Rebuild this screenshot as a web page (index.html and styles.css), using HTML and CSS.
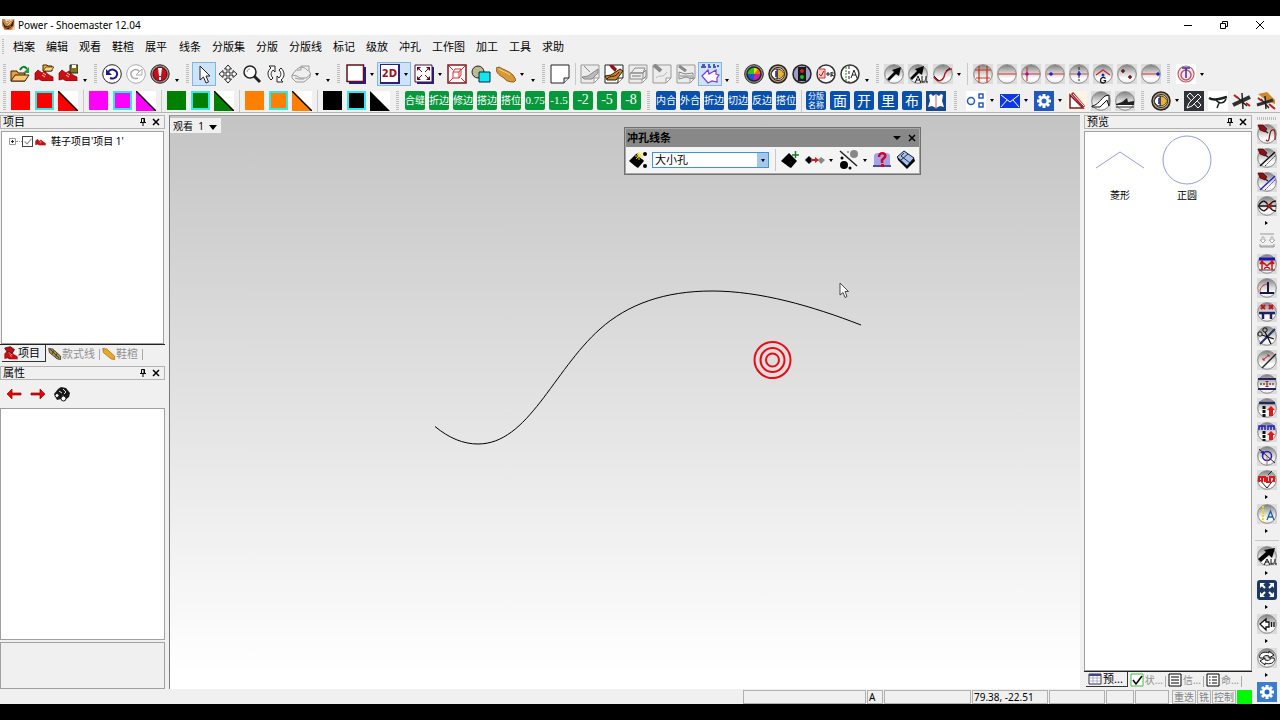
FILE: index.html
```html
<!DOCTYPE html>
<html lang="zh-CN">
<head>
<meta charset="utf-8">
<title>Power - Shoemaster 12.04</title>
<link rel="stylesheet" href="styles.css">
</head>
<body>
<svg class="defs" aria-hidden="true">
  <defs>
    <linearGradient id="gBall" x1="0" y1="0" x2="0" y2="1"><stop offset="0" stop-color="#808080"/><stop offset=".45" stop-color="#d4d4d4"/><stop offset=".75" stop-color="#fff"/><stop offset="1" stop-color="#e8e8e8"/></linearGradient>
    <symbol id="ball" viewBox="0 0 20 20"><rect width="20" height="20" fill="#dcdcdc"/><circle cx="10" cy="10" r="9.300" fill="url(#gBall)" stroke="#888"/></symbol>
    <symbol id="shoe" viewBox="0 0 20 20"><path d="M1 9l3-3 4 3 3-2c2 3 4 4 8 6v4H8l-3-2-4 1z" fill="#d00c10" stroke="#700" stroke-width=".7"/><path d="M8 11l3 2m-2-4l3 2M1 17.500h18" stroke="#fff" stroke-width=".8"/></symbol>
    <symbol id="pen" viewBox="0 0 20 20"><path d="M1 1h5l4 4-2 3-5-2z" fill="#8c1018" stroke="#400" stroke-width=".7"/><path d="M8 7l3 2" stroke="#222" stroke-width="1.500"/></symbol>
    <symbol id="ring" viewBox="0 0 20 20"><circle cx="10" cy="10" r="9" fill="#fff" stroke="#333" stroke-width="1.500"/></symbol>
    <symbol id="pin" viewBox="0 0 8 8"><path d="M2.500 .5h3v4h-3zM5 .5v4M1 4.500h6M4 5v3" fill="none" stroke="#000"/></symbol>
    <symbol id="close" viewBox="0 0 8 8"><path d="M1 1l6 6M7 1L1 7" stroke="#000" stroke-width="1.500"/></symbol>
    <symbol id="page" viewBox="0 0 20 20"><path d="M1 1h18v13l-5 5H1z" fill="#ececec" stroke="#999"/><path d="M14 19v-5h5z" fill="#fff" stroke="#999"/></symbol>
    <symbol id="gear" viewBox="0 0 20 20"><path d="M10 3v14M3 10h14M5 5l10 10M15 5L5 15" stroke="#fff" stroke-width="3"/><circle cx="10" cy="10" r="5" fill="#fff"/><circle cx="10" cy="10" r="2.500" fill="#2864c8"/></symbol>
    <symbol id="eye" viewBox="0 0 20 20"><circle cx="10" cy="10" r="9" fill="#c0a068" stroke="#222" stroke-width="1.500"/><circle cx="10" cy="10" r="6.500" fill="#f4f0e4" stroke="#222"/><path d="M9 5c6 0 6 5 8 5-2 0-2 5-8 5z" fill="#f0b030" stroke="#442"/><path d="M3 10c2-5 5-5 6-5v10c-1 0-4 0-6-5z" fill="#fff" stroke="#114"/><path d="M8 7v6" stroke="#1020a0" stroke-width="1.500"/></symbol>
  </defs>
</svg>

<div class="app">
  <header class="titlebar">
    <svg class="logo" viewBox="0 0 14 14"><path d="M0 1h14v12H3L0 8z" fill="#ecd8b8"/><path d="M0 1h3l2 5 8-5v8l-3 4H3L0 8z" fill="#b88848"/><path d="M0 3l4 6 5-1 4-6-1 6-5 4-4-1z" fill="#38180c"/><path d="M3 11l7-2M5 4l3-1" stroke="#e84820"/><path d="M6 8l4-4" stroke="#f8d860"/></svg>
    <span class="title">Power - Shoemaster 12.04</span>
    <button class="win" aria-label="最小化"><svg viewBox="0 0 10 10"><path d="M1 5.500h8" stroke="#000"/></svg></button>
    <button class="win" aria-label="还原"><svg viewBox="0 0 10 10"><path d="M1.500 3.500h5v5h-5zM3.500 3V1.500h5v5H7" fill="none" stroke="#000"/></svg></button>
    <button class="win" aria-label="关闭"><svg viewBox="0 0 10 10"><path d="M1 1l8 8M9 1L1 9" stroke="#000"/></svg></button>
  </header>

  <nav class="menu"><i class="grip"></i>
    <button>档案</button><button>编辑</button><button>观看</button><button>鞋楦</button><button>展平</button><button class="gap">线条</button><button>分版集</button><button>分版</button><button>分版线</button><button>标记</button><button>级放</button><button>冲孔</button><button>工作图</button><button>加工</button><button>工具</button><button>求助</button>
  </nav>

  <div class="bar">
    <i class="grip first"></i>
    <button class="tool" aria-label="打开"><svg viewBox="0 0 20 20"><path d="M1 17V7h6l1 2h7v8z" fill="#e8a040" stroke="#402000"/><path d="M1 17l4-6h14l-4 6z" fill="#f8c878" stroke="#402000"/><path d="M10 6c2-4 5-4 7-1" fill="none" stroke="#087820" stroke-width="2"/><path d="M19 3v6h-6z" fill="#20a040"/></svg></button>
    <button class="tool" aria-label="打开鞋子"><svg viewBox="0 0 20 20"><use href="#shoe"/><path d="M9 7V1h4l1 1h4v5z" fill="#e8b838" stroke="#402000"/><path d="M9 7l3-4h8l-3 4z" fill="#f8d878" stroke="#402000" stroke-width=".7"/></svg></button>
    <button class="tool" aria-label="保存鞋子"><svg viewBox="0 0 20 20"><use href="#shoe"/><path d="M12 1h8v8h-8z" fill="#807818" stroke="#222"/><path d="M14 1h4v3h-4z" fill="#fff"/></svg></button>
    <button class="more" aria-label="更多"></button><i class="grip"></i>
    <button class="tool" aria-label="撤消"><svg viewBox="0 0 20 20"><circle cx="10" cy="10" r="9.300" fill="#fff" stroke="#222"/><path d="M6 8c4-5 10-1 9 3-1 4-5 4-7 3" fill="none" stroke="#1c1890" stroke-width="2"/><path d="M4 5v6h6z" fill="#1c1890"/></svg></button>
    <button class="tool" aria-label="重做"><svg viewBox="0 0 20 20"><circle cx="10" cy="10" r="9.300" fill="#fff" stroke="#aaa"/><path d="M14 8C10 3 4 7 5 11c1 4 5 4 7 3" fill="none" stroke="#aaa" stroke-width="1.500"/><path d="M16 5v6h-6z" fill="#fff" stroke="#aaa"/></svg></button>
    <button class="tool" aria-label="停止"><svg viewBox="0 0 20 20"><circle cx="10" cy="10" r="9.200" fill="#999" stroke="#222"/><circle cx="10" cy="10" r="7" fill="#c80c1c" stroke="#600"/><path d="M8 4h4l-1 8H9zM9 13h2v3H9z" fill="#fff"/></svg></button>
    <button class="more" aria-label="更多"></button><i class="grip"></i>
    <button class="tool on" aria-label="选择"><svg viewBox="0 0 20 20"><path d="M6 2v14l3.500-3 2.500 6 2.500-1-2.500-6h4z" fill="#fff" stroke="#222"/></svg></button>
    <button class="tool" aria-label="移动"><svg viewBox="0 0 20 20"><path d="M10 1l3.500 4H11v4h4V6.500l4 3.500-4 3.500V11h-4v4h2.500L10 19l-3.500-4H9v-4H5v2.500L1 10l4-3.500V9h4V5H6.500z" fill="#fff" stroke="#222"/></svg></button>
    <button class="tool" aria-label="缩放"><svg viewBox="0 0 20 20"><path d="M12 12l6 6" stroke="#222" stroke-width="3"/><circle cx="8" cy="8" r="6" fill="#fff" stroke="#222" stroke-width="1.500"/><path d="M5 8c0-2 1-3 3-3" fill="none" stroke="#888"/></svg></button>
    <button class="tool" aria-label="旋转"><svg viewBox="0 0 20 20"><path d="M9 2H3l2 2c-4 3-4 8 0 12l2-2c-3-3-2-6 0-8l2 2zM11 18h6l-2-2c4-3 4-8 0-12l-2 2c3 3 2 6 0 8l-2-2z" fill="#fff" stroke="#222"/></svg></button>
    <button class="tool drop" aria-label="翻转"><svg viewBox="0 0 20 20"><path d="M1 11l4-5h5V2h8v5l2 3-5 4H9l-3-2zM1 11v3l4 4h8l6-5v-3M4 14l4 1h5M6 5c4-3 8-2 11 2" fill="#eee" stroke="#999"/></svg></button>
    <button class="more" aria-label="更多"></button><i class="grip"></i>
    <button class="tool drop" aria-label="窗口"><svg viewBox="0 0 20 20"><path d="M3 19h16V3" fill="none" stroke="#222080" stroke-width="2"/><path d="M1 1h16.500v16.500H1z" fill="#fff" stroke="#601020" stroke-width="1.500"/></svg></button>
    <button class="tool drop on" aria-label="二维"><span class="twod">2D</span></button>
    <button class="tool drop" aria-label="全屏"><svg viewBox="0 0 20 20"><path d="M3 19h16V3" fill="none" stroke="#222080" stroke-width="2"/><path d="M1 1h17v17H1z" fill="#fff" stroke="#401040"/><path d="M3 3h4L3 7zM16 3h-4l4 4zM3 16h4l-4-4zM16 16h-4l4-4z" fill="#600c10"/><path d="M4 4l4 4m7-4l-4 4M4 15l4-4m7 4l-4-4" stroke="#600c10"/></svg></button>
    <button class="tool" aria-label="适合选择"><svg viewBox="0 0 20 20"><path d="M1 1h18v18H1z" fill="#fff" stroke="#801820" stroke-width="1.500"/><path d="M6 8h6v6H6zM6 8l2-3h6v6l-2 3M12 8l2-3M2 2l4 4m12-4l-4 4M2 18l4-4m12 4l-4-4" fill="none" stroke="#d83030"/></svg></button>
    <button class="tool" aria-label="图形"><svg viewBox="0 0 20 20"><circle cx="7" cy="8" r="6" fill="#b8bc90" stroke="#222"/><path d="M8 8h11v10H8z" fill="#10e8f0" stroke="#124"/></svg></button>
    <button class="tool drop" aria-label="鞋楦"><svg viewBox="0 0 20 20"><path d="M0 4l3-1c5 3 10 4 14 8l3 5-2 2c-5 0-8-1-10-4-3-2-8-4-8-10z" fill="#d89838" stroke="#906018"/><path d="M3 5c4 3 8 3 11 6" stroke="#f8d080" fill="none"/></svg></button>
    <button class="more" aria-label="更多"></button><i class="grip"></i>
    <button class="tool" aria-label="空白页"><svg viewBox="0 0 20 20"><path d="M1 1h18v13l-5 5H1z" fill="#fff" stroke="#222"/><path d="M14 19v-5h5" fill="#ddd" stroke="#222"/></svg></button>
    <i class="sep"></i>
    <button class="tool" aria-label="鞋楦页"><svg viewBox="0 0 20 20"><use href="#page"/><path d="M2 13l6-1 10-7v4l-6 6H4zM4 2l6 6" stroke="#888" fill="#bbb"/></svg></button>
    <button class="tool" aria-label="款式页"><svg viewBox="0 0 20 20"><path d="M1 1h18v13l-5 5H1z" fill="#fff" stroke="#222"/><path d="M1 12l6-1 9-6 3 2-7 9H3z" fill="#c88828" stroke="#301800"/><path d="M5 1h4l4 4-2 3-4-4z" fill="#901018"/><path d="M3 15c4-5 8 0 12-7" fill="none" stroke="#301800"/><path d="M14 19v-5h5" fill="#fff" stroke="#222"/></svg></button>
    <button class="tool" aria-label="分版页"><svg viewBox="0 0 20 20"><use href="#page"/><path d="M3 9l4-5h10l-2 5zM2 9h13v6H2zM15 9l3-3v6l-3 3" fill="#eee" stroke="#888"/><path d="M4 12h9" stroke="#777"/></svg></button>
    <button class="tool" aria-label="标记页"><svg viewBox="0 0 20 20"><use href="#page"/><path d="M2 1l7 6" stroke="#888" stroke-width="4"/><path d="M4 14c3-4 7 1 11-6" fill="none" stroke="#bbb"/></svg></button>
    <button class="tool" aria-label="工作页"><svg viewBox="0 0 20 20"><use href="#page"/><path d="M3 2l7 5" stroke="#888" stroke-width="3"/><path d="M3 8v7l7-2 7 2V9l-8 1zM4 12h12" fill="none" stroke="#888"/></svg></button>
    <button class="tool on" aria-label="冲孔"><svg viewBox="0 0 20 20"><path d="M1 3h5M2 1h3M8 3h3M13 3h3M8 1h2M13 1h2M18 1v2" fill="none" stroke="#2828a0" stroke-width="1.500"/><path d="M2 12l6-6 1 4 7-4v4l3 1-2 3v4l-5-1-4 2z" fill="#fff" stroke="#8038d0" stroke-width="1.200"/></svg></button>
    <button class="more" aria-label="更多"></button><i class="grip"></i>
    <button class="tool" aria-label="颜色"><svg viewBox="0 0 20 20"><circle cx="10" cy="10" r="9.300" fill="#999" stroke="#222"/><path d="M10 10V3a7 7 0 0 0-7 7z" fill="#30c020"/><path d="M10 10V3a7 7 0 0 1 7 7z" fill="#f07020"/><path d="M10 10h7a7 7 0 0 1-7 7z" fill="#d020a0"/><path d="M10 10v7a7 7 0 0 1-7-7z" fill="#2050e0"/><path d="M10 10V3l4 2z" fill="#f0e010"/><circle cx="10" cy="10" r="7" fill="none" stroke="#222" stroke-width="1.500"/></svg></button>
    <button class="tool" aria-label="可见"><svg viewBox="0 0 20 20"><use href="#eye"/></svg></button>
    <button class="tool" aria-label="状态灯"><svg viewBox="0 0 20 20"><circle cx="10" cy="10" r="9" fill="#a09cc8" stroke="#222" stroke-width="1.500"/><path d="M6 3h8v14H6z" fill="#181818"/><circle cx="10" cy="7" r="2" fill="#e01818"/><circle cx="10" cy="13" r="2" fill="#10c020"/></svg></button>
    <button class="tool" aria-label="检查"><svg viewBox="0 0 20 20"><use href="#ring"/><path d="M2 5h7v9H2" fill="#fcc" stroke="#d03030"/><path d="M3 10l2 2 3-5" fill="none" stroke="#c01010"/><path d="M10 10h4m-2-2v4M15 9c3-2 3 1 0 2l3 1M15 8v5" stroke="#222" fill="none"/></svg></button>
    <button class="tool" aria-label="文字"><svg viewBox="0 0 20 20"><use href="#ring"/><path d="M6 3v14" stroke="#208020" stroke-dasharray="2 1"/><path d="M9 2v16" stroke="#222" stroke-dasharray="3 2"/><path d="M11 14l3-8 3 8m-5-3h4" fill="none" stroke="#222"/></svg></button>
    <button class="more" aria-label="更多"></button><i class="grip"></i>
    <button class="tool" aria-label="选取"><svg viewBox="0 0 20 20"><use href="#ball"/><path d="M3 15l7-7-2-2 9-3-2 9-3-2-7 7z" fill="#080808"/></svg></button>
    <button class="tool" aria-label="选取全部"><svg viewBox="0 0 20 20"><use href="#ball"/><path d="M2 14l7-7-2-2 9-3-2 9-3-2-7 7z" fill="#080808"/><path d="M7 19l3-7 3 7m-5-3h4M14 12v6h3M18 12v6h2" fill="none" stroke="#111"/></svg></button>
    <button class="tool drop" aria-label="曲线"><svg viewBox="0 0 20 20"><use href="#ball"/><path d="M1 13c4 6 8 4 10 0 1-6 4-8 8-8" fill="none" stroke="#c01818" stroke-width="1.500"/><path d="M1 12l5 5M13 7l4-3" stroke="#222"/></svg></button>
    <i class="sep"></i>
    <button class="tool" aria-label="网格"><svg viewBox="0 0 20 20"><use href="#ball"/><path d="M6 2v17M14 2v17M2 6h16M3 14h14" stroke="#d03018" stroke-width="1.200"/></svg></button>
    <button class="tool" aria-label="水平线"><svg viewBox="0 0 20 20"><use href="#ball"/><path d="M1 10h18" stroke="#d05040" stroke-width="1.200"/></svg></button>
    <button class="tool" aria-label="垂点"><svg viewBox="0 0 20 20"><use href="#ball"/><path d="M1 10h18M6 3v14" stroke="#d03030" stroke-width="1.200"/><circle cx="6" cy="10" r="1.800" fill="#a018a0"/></svg></button>
    <button class="tool" aria-label="端点"><svg viewBox="0 0 20 20"><use href="#ball"/><path d="M2 10h17" stroke="#d05040" stroke-width="1.200"/><circle cx="6" cy="10" r="1.800" fill="#2020d0"/></svg></button>
    <button class="tool" aria-label="中点"><svg viewBox="0 0 20 20"><use href="#ball"/><path d="M1 10h18" stroke="#c05050"/><path d="M10 3v14" stroke="#222" stroke-dasharray="3 1"/><circle cx="10" cy="10" r="1.800" fill="#2020d0"/></svg></button>
    <button class="tool" aria-label="重心"><svg viewBox="0 0 20 20"><use href="#ball"/><path d="M3 11l7-5 7 5" fill="none" stroke="#d02020" stroke-width="1.200"/><circle cx="10" cy="11" r="1.500" fill="#2020d0"/><path d="M12.500 14.500c-2-2-5-1-5 2s4 3 5 1v-1h-2" fill="none" stroke="#111" stroke-width="1.200"/></svg></button>
    <button class="tool" aria-label="点"><svg viewBox="0 0 20 20"><use href="#ball"/><path d="M4 7h4M6 5v4M11 13h4M13 11v4" stroke="#601818" stroke-width="1.500"/></svg></button>
    <button class="tool" aria-label="终点"><svg viewBox="0 0 20 20"><use href="#ball"/><path d="M1 10h17" stroke="#d05040" stroke-width="1.200"/><circle cx="17" cy="10" r="1.800" fill="#2020d0"/></svg></button>
    <i class="grip"></i>
    <button class="tool drop" aria-label="定位"><svg viewBox="0 0 20 20"><path d="M0 0h20v20H0z" fill="#fff"/><circle cx="10" cy="10" r="8" fill="#fce8e8" stroke="#b85868" stroke-width="1.200"/><circle cx="10" cy="11" r="5" fill="none" stroke="#b85868" stroke-width="1.500"/><path d="M6 4h8M10 4v10" stroke="#3030b0" stroke-width="1.500"/></svg></button>
  </div>

  <div class="bar">
    <i class="grip first"></i>
    <button class="tool" aria-label="红色"><span class="sw red"></span></button><button class="tool" aria-label="红色边框"><span class="sw red edge"></span></button><button class="tool" aria-label="红色半填"><svg viewBox="0 0 20 20"><path d="M0 0h20v20H0z" fill="#fff"/><path d="M0 0l20 20H0z" fill="#f00"/><path d="M0 0l20 20" stroke="#000" stroke-width="1.500"/></svg></button><i class="sep"></i>
    <button class="tool" aria-label="洋红"><span class="sw magenta"></span></button><button class="tool" aria-label="洋红边框"><span class="sw magenta edge"></span></button><button class="tool" aria-label="洋红半填"><svg viewBox="0 0 20 20"><path d="M0 0h20v20H0z" fill="#fff"/><path d="M0 0l20 20H0z" fill="#f0f"/><path d="M0 0l20 20" stroke="#000" stroke-width="1.500"/></svg></button><i class="sep"></i>
    <button class="tool" aria-label="绿色"><span class="sw green"></span></button><button class="tool" aria-label="绿色边框"><span class="sw green edge"></span></button><button class="tool" aria-label="绿色半填"><svg viewBox="0 0 20 20"><path d="M0 0h20v20H0z" fill="#fff"/><path d="M0 0l20 20H0z" fill="#008000"/><path d="M0 0l20 20" stroke="#000" stroke-width="1.500"/></svg></button><i class="sep"></i>
    <button class="tool" aria-label="橙色"><span class="sw orange"></span></button><button class="tool" aria-label="橙色边框"><span class="sw orange edge"></span></button><button class="tool" aria-label="橙色半填"><svg viewBox="0 0 20 20"><path d="M0 0h20v20H0z" fill="#fff"/><path d="M0 0l20 20H0z" fill="#ff8000"/><path d="M0 0l20 20" stroke="#000" stroke-width="1.500"/></svg></button><i class="sep"></i>
    <button class="tool" aria-label="黑色"><span class="sw black"></span></button><button class="tool" aria-label="黑色边框"><span class="sw black edge"></span></button><button class="tool" aria-label="黑色半填"><svg viewBox="0 0 20 20"><path d="M0 0h20v20H0z" fill="#fff"/><path d="M0 0l20 20H0z"/></svg></button><i class="grip"></i>
    <button class="tool"><span class="tag">合缝</span></button><button class="tool"><span class="tag">折边</span></button><button class="tool"><span class="tag">修边</span></button><button class="tool"><span class="tag">搭边</span></button><button class="tool"><span class="tag">搭位</span></button><button class="tool"><span class="tag num">0.75</span></button><button class="tool"><span class="tag num">-1.5</span></button><button class="tool"><span class="tag num big">-2</span></button><button class="tool"><span class="tag num big">-5</span></button><button class="tool"><span class="tag num big">-8</span></button><i class="grip"></i>
    <button class="tool"><span class="tag blue">内合</span></button><button class="tool"><span class="tag blue">外合</span></button><button class="tool"><span class="tag blue">折边</span></button><button class="tool"><span class="tag blue">切边</span></button><button class="tool"><span class="tag blue">反边</span></button><button class="tool"><span class="tag blue">搭位</span></button><i class="sep"></i>
    <button class="tool"><span class="tag blue four">分版<br>名称</span></button><button class="tool"><span class="tag blue one">面</span></button><button class="tool"><span class="tag blue one">开</span></button><button class="tool"><span class="tag blue one">里</span></button><button class="tool"><span class="tag blue one">布</span></button>
    <button class="tool" aria-label="皮料"><svg viewBox="0 0 20 20"><path d="M0 0h20v20H0z" fill="#184890"/><path d="M3 4l2-1 2 2 3-2 3 2 2-2 2 1-1 6 2 6-4-1-4 2-4-2-4 1 2-6z" fill="#fff"/><path d="M10 3v15" stroke="#c06060"/></svg></button>
    <i class="grip wide"></i>
    <button class="tool drop" aria-label="圆点"><svg viewBox="0 0 20 20"><path d="M0 0h20v20H0z" fill="#fff"/><circle cx="5" cy="10" r="3.500" fill="none" stroke="#2858c8" stroke-width="1.500"/><path d="M13 3h4v4h-4zM13 12h4v4h-4z" fill="none" stroke="#2858c8" stroke-width="1.500"/></svg></button>
    <button class="tool drop" aria-label="邮件"><svg viewBox="0 0 20 20"><path d="M0 3h20v14H0z" fill="#1038e0"/><path d="M1 4l9 7 9-7M1 16l6-7M19 16l-6-7" fill="none" stroke="#fff"/></svg></button>
    <button class="tool drop" aria-label="设置"><svg viewBox="0 0 20 20"><path d="M0 0h20v20H0z" fill="#2058c0"/><use href="#gear"/></svg></button>
    <button class="tool" aria-label="量度"><svg viewBox="0 0 20 20"><path d="M0 0h20v20H0z" fill="#fff4e4"/><path d="M3 4v13h13z" fill="#fff" stroke="#801820" stroke-width="1.500"/><path d="M5 2l12 14" stroke="#b02030" stroke-width="3"/><path d="M6 3l11 12" stroke="#fff"/></svg></button>
    <button class="tool" aria-label="鞋跟"><svg viewBox="0 0 20 20"><use href="#ball"/><path d="M1 15c6-1 9-7 13-10l4-1v11l-2-6-7 7H1z" fill="#fff" stroke="#111"/></svg></button>
    <button class="tool" aria-label="鞋面"><svg viewBox="0 0 20 20"><use href="#ball"/><path d="M1 13l6-2 5-4 1 4 6-1v4H1z" fill="#222"/><path d="M1 16h18" stroke="#333"/></svg></button>
    <i class="grip"></i>
    <button class="tool drop" aria-label="显示"><svg viewBox="0 0 20 20"><use href="#eye"/></svg></button>
    <button class="tool" aria-label="尺笔"><svg viewBox="0 0 20 20"><path d="M0 0h20v20H0z" fill="#303438"/><path d="M3 5l3-3 11 12-3 3z" fill="#303438" stroke="#fff"/><path d="M3 17l2-5 9-9 3 3-9 9z" fill="#303438" stroke="#fff"/></svg></button>
    <button class="tool" aria-label="带子"><svg viewBox="0 0 20 20"><path d="M0 0h20v20H0z" fill="#fff"/><path d="M1 7c5 3 10 1 18-1" fill="none" stroke="#182020" stroke-width="2.500"/><path d="M8 9c3 4 8 4 10-1M11 12l-2 5" fill="none" stroke="#182020" stroke-width="1.500"/></svg></button>
    <button class="tool" aria-label="缝合"><svg viewBox="0 0 20 20"><path d="M1 14L18 6" stroke="#303030" stroke-width="4"/><path d="M10 2l1 16M5 6l10 9" stroke="#222" stroke-width="1.500"/><path d="M2 4l4 3M14 12l4 3" stroke="#c01818" stroke-width="2"/></svg></button>
    <button class="tool" aria-label="楦缝"><svg viewBox="0 0 20 20"><path d="M2 3l9-2 8 8v4l-8-3z" fill="#d08828"/><path d="M1 14l16-5" stroke="#303030" stroke-width="3"/><path d="M9 5l1 13M5 8l8 9" stroke="#222" stroke-width="1.500"/><path d="M2 7l4 3M13 13l6 5" stroke="#c01818" stroke-width="2"/></svg></button>
  </div>

  <div class="work">
    <div class="center">
      <div class="docks">
        <aside class="left">
          <div class="cap"><h2>项目</h2><button aria-label="固定"><svg viewBox="0 0 8 8"><use href="#pin"/></svg></button><button aria-label="关闭"><svg viewBox="0 0 8 8"><use href="#close"/></svg></button></div>
          <div class="box tree">
            <div class="node"><button class="plus" aria-label="展开"><svg viewBox="0 0 7 7"><path d="M.5 .5h6v6h-6z" fill="#fff" stroke="#999"/><path d="M2 3.500h3M3.500 2v3" stroke="#224"/></svg></button><i class="dots"></i><label><input type="checkbox" checked><svg viewBox="0 0 20 20"><use href="#shoe"/></svg><span>鞋子项目'项目 1'</span></label></div>
          </div>
          <div class="tabs"><button class="cur"><svg viewBox="0 0 20 20"><use href="#shoe" y="2"/><path d="M1 3l8-2 6 4-3 5-8-2z" fill="#c01018" stroke="#300"/></svg>项目</button><button><svg viewBox="0 0 20 20"><path d="M1 2l6 1 11 10v5l-5-1L2 8z" fill="#a89048" stroke="#222"/><path d="M3 3l13 13M8 5l-2 5m7-1l-2 5" stroke="#222"/></svg>款式线</button><button><svg viewBox="0 0 20 20"><path d="M1 2l6 1 11 10v5l-5-1L2 8z" fill="#e8a828" stroke="#a06810"/></svg>鞋楦</button></div>
          <div class="cap second"><h2>属性</h2><button aria-label="固定"><svg viewBox="0 0 8 8"><use href="#pin"/></svg></button><button aria-label="关闭"><svg viewBox="0 0 8 8"><use href="#close"/></svg></button></div>
          <div class="props"><button aria-label="后退"><svg viewBox="0 0 16 16"><path d="M1 8l5-5v4h9v2H6v4z" fill="#e00808" stroke="#900" stroke-width=".7"/></svg></button><button aria-label="前进"><svg viewBox="0 0 16 16"><path d="M15 8l-5-5v4H1v2h9v4z" fill="#e00808" stroke="#900" stroke-width=".7"/></svg></button><button aria-label="查找"><svg viewBox="0 0 16 16"><path d="M0 8l4-5 3-2 5 1 4 5-1 4-4 3-2-5-2 4-4 1z" fill="#181818"/><circle cx="3" cy="9.500" r="2" fill="#fff" stroke="#111"/><circle cx="9.500" cy="12.500" r="2.500" fill="#fff" stroke="#111"/><path d="M5 5l3 2M9 3l3 3M10 8l2-2" stroke="#ddd"/></svg></button></div>
          <div class="box list"></div>
          <div class="box hint"></div>
        </aside>

        <main class="canvas">
          <svg class="draw" viewBox="170 115 910 573" preserveAspectRatio="xMinYMin meet">
            <path d="M435 425.500C449 437 463 443 478 443C528 443 553 370 600 328C628 303 665 290 712 290C760 290 812 305 861 324" fill="none" stroke="#000"/>
            <g fill="none" stroke="#e80c14" stroke-width="2"><circle cx="772.500" cy="359" r="18"/><circle cx="772.500" cy="359" r="12"/><circle cx="772.500" cy="359" r="6.500"/></g>
            <path d="M840 282v12l3-2.500 2 5 2-1-2-5h3.500z" fill="#fff" stroke="#222" stroke-width=".8"/>
          </svg>
          <button class="view">观看&nbsp; 1 <i></i></button>
          <section class="float">
            <div class="fcap"><h2>冲孔线条</h2><button class="fmenu" aria-label="选项"></button><button aria-label="关闭"><svg viewBox="0 0 8 8"><use href="#close"/></svg></button></div>
            <div class="frow">
              <button class="tool" aria-label="新冲孔"><svg viewBox="0 0 20 20"><path d="M1 11l8-8 7 8-6 7-3-2z" fill="#000"/><path d="M11 2v8M7 6h8M8 3l6 6M14 3L8 9" stroke="#f0e020"/><circle cx="17" cy="4" r="2"/><circle cx="17" cy="16" r="2"/></svg></button>
              <span class="combo"><select aria-label="冲孔类型"><option>大小孔</option></select><i></i></span>
              <i class="sep"></i>
              <button class="tool" aria-label="添加"><svg viewBox="0 0 20 20"><path d="M1 11l8-8 8 8-6 7-2-1z"/><path d="M12 5h7M15.500 1v7" stroke="#187828" stroke-width="1.500"/></svg></button>
              <button class="tool drop" aria-label="间距"><svg viewBox="0 0 20 20"><path d="M0 10l4-4 4 4-4 4z"/><path d="M13 10l3-3 4 3-4 4z" fill="#888"/><path d="M6 10h6" stroke="#e01818" stroke-width="2"/><path d="M10 7l4 3-4 3z" fill="#e01818"/></svg></button>
              <button class="tool drop" aria-label="分布"><svg viewBox="0 0 20 20"><path d="M1 1l17 15" stroke="#222" stroke-width="1.500"/><circle cx="15" cy="4" r="4" fill="#888"/><circle cx="5" cy="15" r="4"/><circle cx="3" cy="8" r="1.500"/><circle cx="11" cy="18" r="1.500"/><circle cx="9" cy="2" r="1" fill="#888"/></svg></button>
              <button class="tool" aria-label="查询"><svg viewBox="0 0 20 20"><path d="M2 15V6q0-3 4-3h8q4 0 4 3v9z" fill="#a8a0e8"/><path d="M1 16h18" stroke="#181868" stroke-width="1.500"/><path d="M7 7c0-6 8-4 6 0l-3 3v3" fill="none" stroke="#d00828" stroke-width="2.500"/><path d="M9 14h3v3H9z" fill="#d00828"/></svg></button>
              <button class="tool" aria-label="擦除"><svg viewBox="0 0 20 20"><path d="M1 7l1 3 9 9 8-8-1-3-9-6z"/><path d="M1 7l7-6 10 7-7 8z" fill="#a8c0e8" stroke="#123"/><path d="M5 10l7-6M5 6l9 7M8 3l-3 3" stroke="#234" fill="none"/></svg></button>
            </div>
          </section>
        </main>

        <aside class="right">
          <div class="cap"><h2>预览</h2><button aria-label="固定"><svg viewBox="0 0 8 8"><use href="#pin"/></svg></button><button aria-label="关闭"><svg viewBox="0 0 8 8"><use href="#close"/></svg></button></div>
          <div class="box shapes">
            <figure><svg viewBox="0 0 50 50"><path d="M1 33l24-16 24 16" fill="none" stroke="#7884c8" stroke-width=".8"/></svg><figcaption>菱形</figcaption></figure>
            <figure><svg viewBox="0 0 50 50"><circle cx="25" cy="25" r="24" fill="none" stroke="#7884c8" stroke-width=".8"/></svg><figcaption>正圆</figcaption></figure>
          </div>
          <div class="tabs"><button class="cur"><svg viewBox="0 0 14 14"><path d="M1 2h12v10H1z" fill="#fff" stroke="#334"/><path d="M1 3h12" stroke="#448" stroke-width="2"/><path d="M1 6h12M1 9h12M5 4v8M9 4v8" stroke="#99b" stroke-width=".7"/></svg>预...</button><button><svg viewBox="0 0 14 14"><path d="M1 1h12v12H1z" fill="#fff" stroke="#40c040"/><path d="M3 7l3 4 6-8" fill="none" stroke="#000" stroke-width="1.500"/></svg>状...</button><button><svg viewBox="0 0 14 14"><path d="M1 1h12v12H1z" fill="#fff" stroke="#000"/><path d="M3 4h8M3 7h8M3 10h8" stroke="#000"/></svg>信...</button><button><svg viewBox="0 0 14 14"><path d="M1 1h12v12H1z" fill="#fff" stroke="#000"/><path d="M3 4h1.500M6 4h5M3 7h1.500M6 7h5M3 10h1.500M6 10h5" stroke="#000"/></svg>命...</button></div>
        </aside>
      </div>

      <footer class="status"><span class="w1"></span><span class="w2">A</span><span class="w3"></span><span class="w4">79.38, -22.51</span><span class="w5"></span><span class="w6"></span><span class="w7"></span><span class="dim">重迭</span><span class="dim">铣</span><span class="dim">控制</span><b></b></footer>
    </div>

    <nav class="side">
      <i class="hgrip"></i>
      <button class="tool" aria-label="画曲线"><svg viewBox="0 0 20 20"><use href="#ball"/><path d="M9 16c5 4 2-8 6-10s3 6 3 10" fill="none" stroke="#801818" stroke-width="1.200"/><use href="#pen"/></svg></button>
      <button class="tool" aria-label="画直线"><svg viewBox="0 0 20 20"><use href="#ball"/><path d="M3 18L18 4" stroke="#111" stroke-width="1.500"/><path d="M8 18l11-11" stroke="#444" stroke-dasharray="2 1"/><use href="#pen"/></svg></button>
      <button class="tool" aria-label="画平行线"><svg viewBox="0 0 20 20"><use href="#ball"/><path d="M3 18L18 4" stroke="#2828c8" stroke-width="1.500"/><path d="M8 18l11-11" stroke="#4040c0" stroke-dasharray="2 1"/><use href="#pen"/></svg></button>
      <button class="tool" aria-label="镜像"><svg viewBox="0 0 20 20"><use href="#ball"/><path d="M1 10h18M2 9c4-6 7-4 9 0s4 6 8 6M2 11c4 6 7 4 9 0s4-6 8-6" fill="none" stroke="#111" stroke-width="1.300"/><path d="M10 8l5 5M15 7l-5 6" stroke="#c01818" stroke-width="1.300"/></svg></button>
      <button class="next" aria-label="展开"></button>
      <button class="tool" aria-label="对齐"><svg viewBox="0 0 20 20"><path d="M3 4h14M3 16h14M3 14v3h14v-3" stroke="#999" fill="none"/><path d="M5 7h2v3h2l-3 3-3-3h2zM14 7h2v3h2l-3 3-3-3h2z" fill="#fff" stroke="#aaa"/></svg></button>
      <button class="tool" aria-label="缩放线"><svg viewBox="0 0 20 20"><use href="#ball"/><path d="M2 5h16" stroke="#1818b8" stroke-width="3"/><path d="M2 16h16" stroke="#334"/><path d="M5 8v8M15 8v8M7 9l6 6M13 9l-6 6M3 10l2-3 2 3M13 10l2-3 2 3" fill="none" stroke="#d01010" stroke-width="1.500"/></svg></button>
      <button class="tool" aria-label="角度"><svg viewBox="0 0 20 20"><use href="#ball"/><path d="M3 15h14M11 15V4" stroke="#181848" stroke-width="2"/><path d="M3 14c0-5 3-7 7-8" stroke="#c03030" fill="none"/></svg></button>
      <button class="tool" aria-label="移动点"><svg viewBox="0 0 20 20"><use href="#ball"/><path d="M2 11h16M6 11v6M14 11v6" stroke="#202060" stroke-width="2.500"/><path d="M4 3l4 4m0-4L4 7M12 3l4 4m0-4l-4 4" stroke="#c81018" stroke-width="2"/></svg></button>
      <button class="tool" aria-label="剪切"><svg viewBox="0 0 20 20"><use href="#ball"/><path d="M3 18L18 3" stroke="#283068" stroke-width="2"/><path d="M8 6l6 12M5 9l12 4" stroke="#111" stroke-width="1.300"/><circle cx="3" cy="8" r="2.200" fill="none" stroke="#111"/><circle cx="8" cy="4" r="2.200" fill="none" stroke="#111"/></svg></button>
      <button class="tool" aria-label="延伸"><svg viewBox="0 0 20 20"><use href="#ball"/><path d="M5 18L19 4" stroke="#222" stroke-width="1.500"/><path d="M6 10l6-5M8 10H6V8m4-3h2v2" fill="none" stroke="#d02020"/></svg></button>
      <button class="tool" aria-label="间隔"><svg viewBox="0 0 20 20"><use href="#ball"/><path d="M1 5h18M1 15h18" stroke="#222858" stroke-width="2"/><path d="M3 10h14" stroke="#111" stroke-dasharray="2 1"/><path d="M8 7h4l-2 2zM8 13h4l-2-2z" fill="#d01010"/></svg></button>
      <button class="tool" aria-label="上移"><svg viewBox="0 0 20 20"><use href="#ball"/><path d="M2 5h16" stroke="#222858" stroke-width="2.500"/><path d="M7 8v11" stroke="#111" stroke-width="3" stroke-dasharray="3 1"/><path d="M14 8l4 4h-2v6h-4v-6h-2z" fill="#e01818"/></svg></button>
      <button class="tool" aria-label="毫米移动"><svg viewBox="0 0 20 20"><use href="#ball"/><path d="M2 8V4h3v4m0-4h3v4M11 8V4h3v4m0-4h3v4" fill="none" stroke="#2020c0" stroke-width="1.500"/><path d="M7 9v10" stroke="#111" stroke-width="3" stroke-dasharray="3 1"/><path d="M14 9l4 4h-2v5h-4v-5h-2z" fill="#e01818"/></svg></button>
      <button class="tool" aria-label="转动"><svg viewBox="0 0 20 20"><use href="#ball"/><path d="M2 3l16 14" stroke="#222"/><circle cx="10" cy="10" r="4.500" fill="none" stroke="#2020b0" stroke-width="1.500"/><path d="M3 6l4-1v4z" fill="#2020b0"/><path d="M10 10v9" stroke="#d06060"/></svg></button>
      <button class="tool" aria-label="波形"><svg viewBox="0 0 20 20"><use href="#ball"/><path d="M2 9l8 9 8-10M11 5l4-4" fill="none" stroke="#222"/><path d="M2 12V7h3v5m0-5h3v5m2-5v5h3V7h4v5" fill="none" stroke="#e01818" stroke-width="2"/></svg></button>
      <button class="next" aria-label="展开"></button>
      <button class="tool" aria-label="标注"><svg viewBox="0 0 20 20"><use href="#ball"/><path d="M6 2v16" stroke="#e8d820" stroke-width="2" stroke-dasharray="2 1"/><path d="M10 16l3.500-9 3.500 9m-6-3h5" fill="none" stroke="#2060a0" stroke-width="1.300"/></svg></button>
      <button class="next" aria-label="展开"></button><i class="hsep"></i>
      <button class="tool" aria-label="全选"><svg viewBox="0 0 20 20"><use href="#ball"/><path d="M1 13l8-7-2-2 11-2-3 10-3-3-8 7z"/><path d="M7 19l3-6 3 6m-5-3h4M14 13v5h3M18 13v5h2" fill="none" stroke="#111"/></svg></button>
      <button class="next" aria-label="展开"></button>
      <button class="tool" aria-label="全屏"><svg viewBox="0 0 20 20"><rect width="20" height="20" rx="3" fill="#1c3864"/><path d="M3 3h5L3 8zM17 3h-5l5 5zM3 17h5l-5-5zM17 17h-5l5-5z" fill="#fff"/><path d="M4 4l4 4m8-4l-4 4M4 16l4-4m8 4l-4-4" stroke="#fff" stroke-width="2"/></svg></button>
      <button class="next" aria-label="展开"></button>
      <button class="tool" aria-label="返回"><svg viewBox="0 0 20 20"><use href="#ball"/><path d="M3 10l6-5v3h3v5H9v3zM14.500 8v5M17 8v5" fill="#fff" stroke="#111" stroke-width="1.300"/></svg></button>
      <button class="next" aria-label="展开"></button>
      <button class="tool" aria-label="循环"><svg viewBox="0 0 20 20"><use href="#ball"/><path d="M3 10C1 5 8 3 12 5V3l5 4-5 3V8c-4-1-6 0-5 2zM17 10c2 5-5 7-9 5v2l-5-4 5-3v2c4 1 6 0 5-2z" fill="#fff" stroke="#111"/></svg></button>
      <button class="next" aria-label="展开"></button>
      <button class="tool" aria-label="设置"><svg viewBox="0 0 20 20"><path d="M0 0h20v20H0z" fill="#3c7ccc"/><use href="#gear"/></svg></button>
    </nav>
  </div>
</div>
</body>
</html>
```

FILE: styles.css
```css
* { box-sizing: border-box; }
html, body { height: 100%; }
body {
  margin: 0;
  padding: 16px 0;
  background: #000;
  color: #000;
  font: 11px/14px "Noto Sans", "Noto Sans CJK SC", sans-serif;
  overflow: hidden;
}
button { padding: 0; border: 0; background: none; color: inherit; font: inherit; white-space: nowrap; }
svg { display: block; }
h2 { margin: 0; font: inherit; flex: 1; }
.defs { position: absolute; width: 0; height: 0; }
.app { height: 100%; display: flex; flex-direction: column; background: #f0f0f0; }

.titlebar { display: flex; align-items: center; height: 19px; padding: 0 8px 2px 2px; background: #fff; flex: none; }
.logo { width: 13px; height: 13px; }
.title { flex: 1; padding-left: 3px; font-size: 10px; }
.win { width: 36px; display: grid; place-items: center; height: 16px; }
.win:last-child { width: 24px; margin-left: 6px; }
.win svg { width: 10px; height: 10px; }

.menu { display: flex; align-items: center; gap: 11px; height: 23px; flex: none; }
.menu .grip { width: 2px; margin-left: 2px; margin-right: -2px; height: 16px; }
.menu .gap { margin-left: 1px; }

.bar { display: flex; align-items: center; height: 29px; padding-top: 3px; flex: none; overflow: hidden; }
.bar + .bar { height: 26px; padding-top: 2px; border-bottom: 1px solid #b4b4b4; }
.bar > * { flex: none; }
.grip {
  width: 10px;
  height: 20px;
  background: repeating-linear-gradient(#bcbcbc 0 1px, #f0f0f0 1px 2px) center / 3px 100% no-repeat;
}
.bar + .bar .grip { width: 11px; }
.bar .grip.first, .bar + .bar .grip.first { width: 8px; }
.bar + .bar .grip.wide { width: 15px; }
.sep { width: 6px; height: 22px; background: linear-gradient(#c8c8c8, #c8c8c8) center / 1px 100% no-repeat; }
.drop + .sep { width: 7px; }
.tool { width: 24px; height: 24px; display: flex; align-items: center; justify-content: center; flex: none; }
.tool > svg { width: 20px; height: 20px; }
.drop { width: 34px; justify-content: flex-start; padding-left: 3px; gap: 4px; }
.drop::after { content: ""; border: 2px solid transparent; border-top: 3px solid #000; border-bottom: 0; }
.on { background: #cde4f8; outline: 1px solid #84b4e4; outline-offset: -1px; }
.more { width: 10px; height: 20px; display: flex; align-items: flex-end; justify-content: center; padding-bottom: 2px; }
.drop + .more { width: 11px; }
.more::after { content: ""; border: 2px solid transparent; border-top: 3px solid #000; border-bottom: 0; }
.twod {
  width: 20px; height: 20px;
  border: solid #302070; border-width: 1px 2px 2px 1px;
  background: #fff; color: #a01018;
  font: bold 10px/17px "DejaVu Sans", sans-serif; text-align: center;
}

.sw { width: 19px; height: 19px; }
.edge { border: 2px solid #30e8e8; }
.red { background: #f00; }
.magenta { background: #f0f; }
.green { background: #008000; }
.orange { background: #ff8000; }
.black { background: #000; }
.tag {
  width: 20px; height: 19px;
  border-radius: 2px; background: #08983c; color: #fff;
  font: 10px/18px "Noto Sans CJK SC", sans-serif;
  text-align: center;
}
.num { font: 11px/18px "Liberation Serif", serif; }
.big { font-size: 14px; }
.blue { background: #0850ac; }
.one { font-size: 14px; }
.four { font-size: 8px; line-height: 9px; }

.work { flex: 1; min-height: 0; display: flex; }
.center { flex: 1; min-width: 0; display: flex; flex-direction: column; }
.docks { flex: 1; min-height: 0; display: flex; padding-top: 2px; }
.left { width: 165px; margin-right: 4px; display: flex; flex-direction: column; }
.cap {
  display: flex; align-items: center; gap: 5px; height: 14px; flex: none;
  padding: 0 4px 0 2px; border: 1px solid #b4b4b4;
}
.cap svg, .fcap svg { width: 8px; height: 8px; }
.box { background: #fff; border: 1px solid #a0a0a0; }
.tree { flex: 210; margin: 2px 1px 0; padding: 2px 7px; font-size: 10px; }
.node { display: flex; align-items: center; }
.plus svg { width: 7px; height: 7px; }
.dots { width: 6px; border-top: 1px dotted #999; }
.node label { display: flex; align-items: center; }
.node input { appearance: none; width: 11px; height: 11px; margin: 0 2px 0 0; border: 1px solid #444; background: #fff; }
.node input:checked::after { content: ""; display: block; width: 3px; height: 6px; margin-left: 3px; border: solid #888; border-width: 0 1px 1px 0; transform: rotate(40deg); }
.node label svg { width: 11px; height: 13px; margin-right: 5px; }
.tabs { display: flex; height: 18px; flex: none; border-top: 1px solid #222; color: #909090; }
.tabs button { display: flex; align-items: center; padding: 0 5px 0 2px; position: relative; }
.tabs button::after { content: ""; position: absolute; right: 0; top: 4px; height: 11px; border-right: 1px solid #aaa; }
.tabs svg { width: 14px; height: 14px; }
.tabs .cur { color: #000; border: solid #333; border-width: 0 1px 1px 0; margin-left: 2px; }
.tabs .cur::after { content: none; }
.second { margin-top: 4px; }
.props { display: flex; gap: 8px; height: 28px; flex: none; align-items: center; padding-left: 6px; }
.props svg { width: 16px; height: 16px; }
.list { flex: 232; }
.hint { flex: 46; margin-top: 2px; background: #f0f0f0; }

.canvas {
  flex: 1; min-width: 0; position: relative;
  border-left: 1px solid #777; border-top: 1px solid #999;
  background: linear-gradient(#c4c4c4, #fff 97%);
}
.draw { position: absolute; inset: 0; width: 100%; height: 100%; }
.view { position: absolute; left: 0; top: 2px; height: 15px; width: 51px; padding-left: 3px; background: #f0f0f0; text-align: left; font-size: 10px; }
.view i { display: inline-block; margin-left: 2px; border: 4px solid transparent; border-top: 5px solid #000; border-bottom: 0; }
.float {
  position: absolute; right: 159px; top: 11px; width: 297px;
  border: 1px solid #707070; outline: 1px solid #a8a8a8; outline-offset: -2px; background: #f4f4f4; padding: 1px;
}
.fcap { display: flex; align-items: center; gap: 7px; height: 18px; background: #888; padding: 0 3px 0 1px; font-weight: bold; }
.fmenu { border: 4px solid transparent; border-top: 4px solid #000; border-bottom: 0; }
.frow { display: flex; align-items: center; height: 26px; }
.combo { position: relative; width: 117px; height: 16px; margin: 0 3px 0 2px; }
.combo select { appearance: none; width: 100%; height: 100%; margin: 0; padding: 0 16px 0 2px; border: 1px solid #3c94e0; border-radius: 0; background: #fff; color: #000; font: inherit; }
.combo i { position: absolute; right: 1px; top: 1px; width: 11px; height: 14px; display: grid; place-items: center; background: #a4c8ec; pointer-events: none; }
.combo i::after { content: ""; border: 2px solid transparent; border-top: 3px solid #000; border-bottom: 0; }

.right { width: 168px; margin-left: 4px; display: flex; flex-direction: column; padding-bottom: 2px; }
.right .tabs { height: 16px; }
.right .tabs button { padding: 0 4px 0 2px; }
.right .tabs svg { margin-right: 1px; }
.right .tabs button + button { font-size: 10px; padding-right: 3px; }
.shapes { flex: 1; margin-top: 2px; padding: 3px 0 0 10px; display: flex; gap: 17px; align-items: flex-start; font-size: 10px; }
.shapes figure { margin: 0; text-align: center; }
.shapes svg { width: 50px; height: 50px; margin-bottom: 3px; }

.status { display: flex; justify-content: flex-end; gap: 1px; height: 15px; padding-top: 1px; flex: none; }
.status span { border: 1px solid #b0b0b0; height: 14px; line-height: 12px; padding: 0 1px; font-size: 10px; white-space: nowrap; }
.status .w1 { width: 123px; }
.status .w2 { width: 16px; }
.status .w3 { width: 87px; }
.status .w4 { width: 76px; }
.status .w5 { width: 56px; }
.status .w6 { width: 28px; }
.status .w7 { width: 34px; margin-right: 2px; }
.status .dim { color: #808080; }
.status b { width: 15px; background: #00f800; }

.side { width: 28px; flex: none; display: flex; flex-direction: column; align-items: center; padding: 3px 0 0 1px; }
.hgrip { width: 20px; height: 4px; margin-bottom: 2px; background: repeating-linear-gradient(90deg, #bcbcbc 0 1px, #f0f0f0 1px 2px) center / 100% 3px no-repeat; }
.next { width: 24px; height: 10px; display: grid; place-items: center; flex: none; }
.next::after { content: ""; border: 2px solid transparent; border-left: 3px solid #000; border-right: 0; }
.hsep { width: 24px; height: 8px; flex: none; background: linear-gradient(#c8c8c8, #c8c8c8) center / 100% 1px no-repeat; }
```
